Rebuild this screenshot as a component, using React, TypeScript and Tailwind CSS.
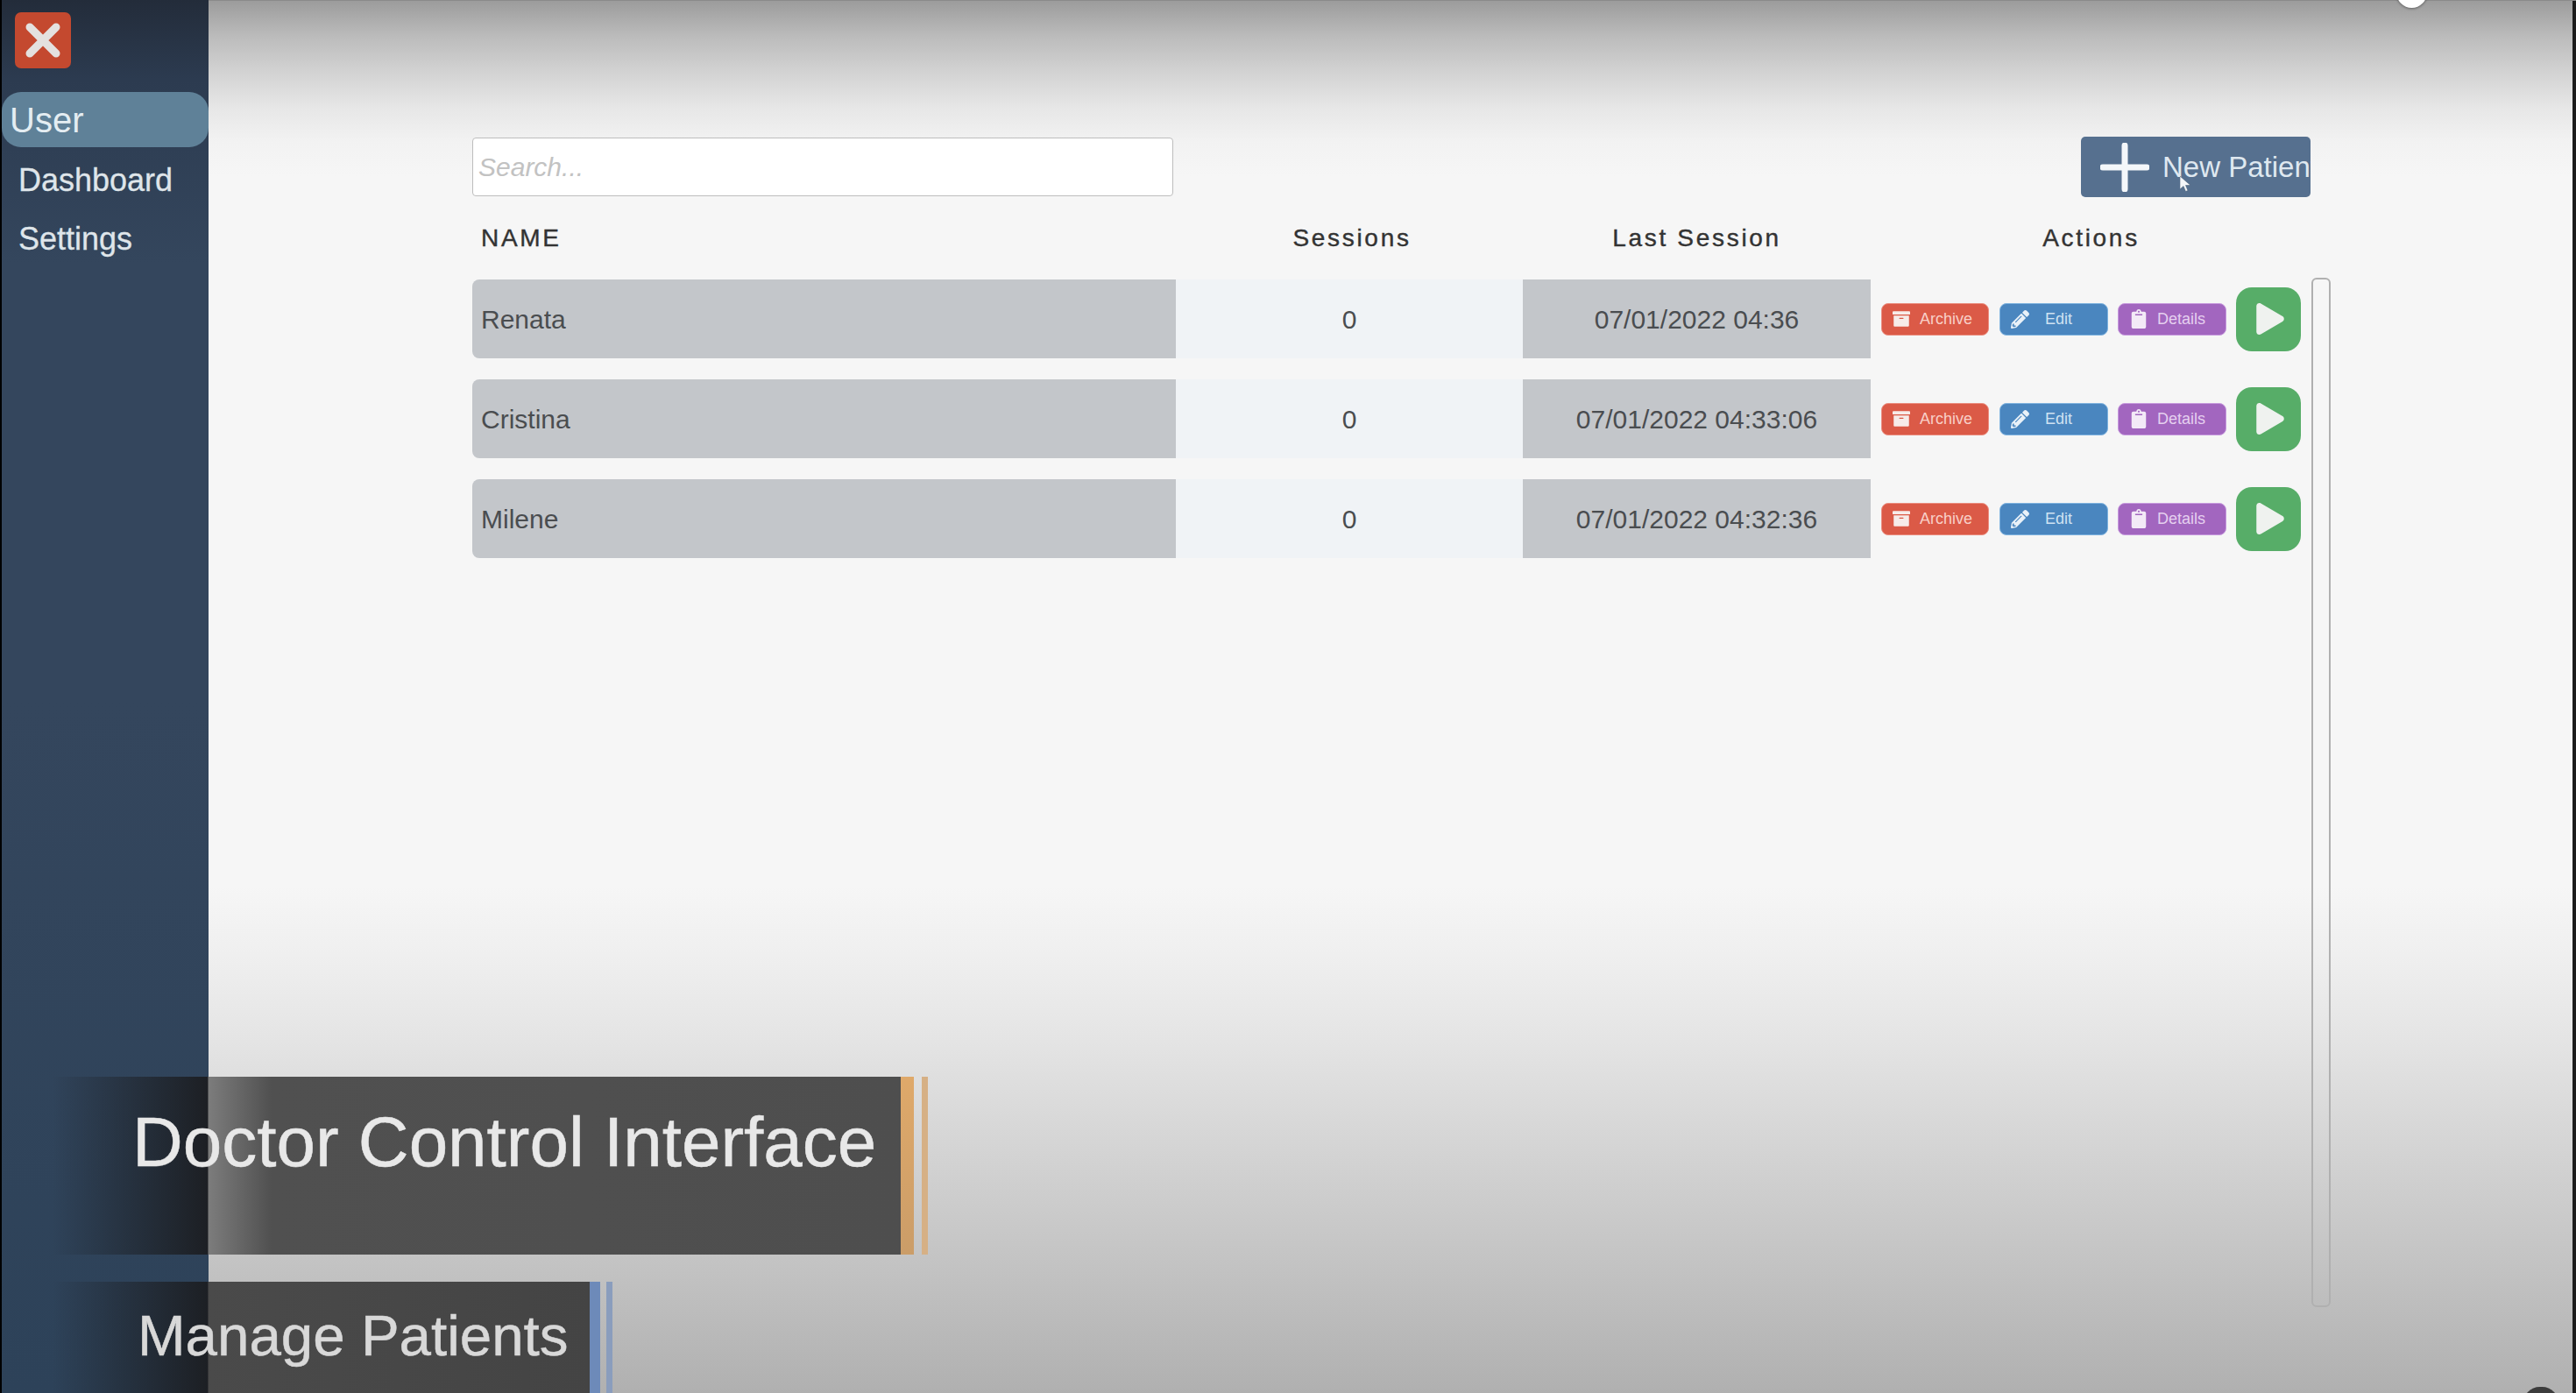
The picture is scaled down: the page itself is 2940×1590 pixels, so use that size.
import { FaArchive, FaClipboard, FaPencilAlt, FaPlay } from 'react-icons/fa'

const PATIENTS = [
  { name: 'Renata', sessions: 0, last: '07/01/2022 04:36' },
  { name: 'Cristina', sessions: 0, last: '07/01/2022 04:33:06' },
  { name: 'Milene', sessions: 0, last: '07/01/2022 04:32:36' },
]

function RowActions() {
  return (
    <div className="flex items-center pl-[12px]">
      <button className="flex h-[37px] w-[123px] items-center rounded-[8px] border border-[#ea8d7f] bg-[#db5a47] pl-[12px] text-[18px] text-[#f8d0c8]">
        <FaArchive className="h-[20px] w-[20px] text-[#f7ece9]" />
        <span className="ml-[11px]">Archive</span>
      </button>
      <button className="ml-[12px] flex h-[37px] w-[124px] items-center rounded-[8px] border border-[#7fb3df] bg-[#4a86bf] pl-[12px] text-[18px] text-[#cfe2f2]">
        <FaPencilAlt className="h-[21px] w-[21px] text-[#e9f1f8]" />
        <span className="ml-[18px]">Edit</span>
      </button>
      <button className="ml-[11px] flex h-[37px] w-[124px] items-center rounded-[8px] border border-[#c79ade] bg-[#a266bf] pl-[14px] text-[18px] text-[#e5d0ef]">
        <FaClipboard className="h-[22px] w-[18px] text-[#f3eaf7]" />
        <span className="ml-[12px]">Details</span>
      </button>
      <button className="ml-[11px] flex h-[73px] w-[74px] items-center justify-center rounded-[18px] bg-[#57ad68] pl-[4px]">
        <FaPlay className="h-[36px] w-[32px] text-[#eff2ef]" />
      </button>
    </div>
  )
}

export default function App() {
  return (
    <div className="relative flex h-[1590px] w-[2940px] overflow-hidden font-['Liberation_Sans',Arial,sans-serif]">
      <aside className="h-full w-[238px] shrink-0 border-l-2 border-black bg-[linear-gradient(180deg,#232c3a_0px,#2c3b50_90px,#34465d_300px,#34465d_800px,#2d4259_1590px)]">
        <button className="ml-[15px] mt-[14px] flex h-[64px] w-[64px] items-center justify-center rounded-[7px] bg-[#c4492f]">
          <svg viewBox="0 0 40 40" className="h-[40px] w-[40px]">
            <path d="M5 5l30 30M35 5L5 35" stroke="#e4e1df" strokeWidth="9" strokeLinecap="round" fill="none" />
          </svg>
        </button>
        <div className="mt-[27px] flex h-[63px] items-center rounded-[22px] bg-[#5f8198] pl-[9px] text-[40px] text-[#e4edf2]">
          User
        </div>
        <div className="mt-[18px] flex flex-col gap-[27px] pl-[19px] text-[36px] leading-[40px] text-[#dfe5ea] [-webkit-text-stroke:0.3px_#dfe5ea]">
          <span>Dashboard</span>
          <span>Settings</span>
        </div>
      </aside>

      <main className="relative flex-1 border-t border-[#8a8a8a] bg-[linear-gradient(180deg,#9c9c9c_0px,#bbbbbb_40px,#d2d2d2_80px,#e6e6e6_120px,#f2f2f2_160px,#f6f6f6_200px,#f6f6f6_1010px,#eeeeee_1100px,#e5e5e5_1180px,#cbcbcb_1380px,#b0b0b0_1590px)] pl-[301px] pt-[155px]">
        <div className="w-[2120px]">
          <div className="flex w-[2098px] items-start justify-between">
            <input
              placeholder="Search..."
              className="mt-[1px] h-[67px] w-[800px] rounded-[4px] border border-[#bdbdbd] bg-white pl-[6px] text-[30px] placeholder:italic placeholder:text-[#c2c2c2]"
            />
            <button className="flex h-[69px] w-[262px] items-center overflow-hidden whitespace-nowrap rounded-[5px] bg-[#56708f] pl-[22px] text-[33px] text-[#dfe8f0]">
              <svg viewBox="0 0 56 56" className="h-[56px] w-[56px] shrink-0">
                <path d="M28 3v50M3 28h50" stroke="#f4f7fa" strokeWidth="7" strokeLinecap="round" fill="none" />
              </svg>
              <span className="ml-[15px]">New Patient</span>
            </button>
          </div>

          <div className="mt-[26px] grid h-[40px] w-[2099px] grid-cols-[803px_396px_397px_503px] items-center text-[28px] tracking-[2.7px] text-[#333333] [-webkit-text-stroke:0.4px_#333333]">
            <span className="pl-[10px]">NAME</span>
            <span className="pl-[6px] text-center">Sessions</span>
            <span className="text-center">Last Session</span>
            <span className="text-center">Actions</span>
          </div>

          <div className="relative mt-[28px] flex flex-col gap-[24px]">
            {PATIENTS.map((p) => (
              <div key={p.name} className="grid h-[90px] w-[2099px] grid-cols-[803px_396px_397px_503px] text-[30px] text-[#4a4d50]">
                <div className="flex items-center rounded-l-[8px] bg-[#c3c6ca] pl-[10px]">{p.name}</div>
                <div className="flex items-center justify-center bg-[#f0f3f6]">{p.sessions}</div>
                <div className="flex items-center justify-center bg-[#c3c6ca]">{p.last}</div>
                <RowActions />
              </div>
            ))}
            <div className="absolute left-[2099px] top-[-2px] h-[1175px] w-[22px] rounded-[6px] border-2 border-[#b0b0b0]" />
          </div>
        </div>

        {/* video player bits */}
        <div className="absolute left-[2497px] top-[-27px] h-[35px] w-[35px] rounded-full bg-white shadow-[0_1px_3px_rgba(0,0,0,0.4)]" />
        <div className="absolute right-0 top-0 h-full w-[4px] bg-[#1c1c1c]" />
        <div className="absolute bottom-[-30px] left-[2642px] h-[37px] w-[40px] rounded-full bg-[#3c3c3c]" />
        <svg viewBox="0 0 12 18" className="absolute left-[2250px] top-[200px] h-[18px] w-[12px]">
          <path d="M0 0v15l4-3.5 2.5 6 2.5-1-2.5-6H12z" fill="#f4f6f8" stroke="#41566f" strokeWidth="0.5" />
        </svg>
      </main>

      {/* lower thirds */}
      <div className="absolute left-0 top-[1229px] flex h-[203px] items-stretch">
        <div className="w-[1028px] bg-[linear-gradient(90deg,rgba(28,30,34,0)_60px,rgba(28,30,34,0.97)_237px,#7c7c7c_238px,#505050_310px,#4e4e4e_1028px)] pl-[151px] pt-[29px] text-[80px] leading-[92px] text-[#e8e8e8] [-webkit-text-stroke:0.5px_#e8e8e8]">
          Doctor Control Interface
        </div>
        <div className="w-[15px] bg-[linear-gradient(180deg,#dfa96a,#cb9d68)]" />
        <div className="ml-[9px] w-[7px] bg-[#d6b085]" />
      </div>
      <div className="absolute bottom-0 left-0 flex h-[127px] items-stretch">
        <div className="w-[673px] bg-[linear-gradient(90deg,rgba(28,30,34,0)_60px,rgba(28,30,34,0.97)_237px,#4a4a4a_238px,#444444_673px)] pl-[157px] pt-[24px] text-[65.5px] leading-[76px] text-[#d8d8d8] [-webkit-text-stroke:0.5px_#d8d8d8]">
          Manage Patients
        </div>
        <div className="w-[12px] bg-[#6d8ab9]" />
        <div className="ml-[7px] w-[7px] bg-[#8a9dbd]" />
      </div>
    </div>
  )
}
